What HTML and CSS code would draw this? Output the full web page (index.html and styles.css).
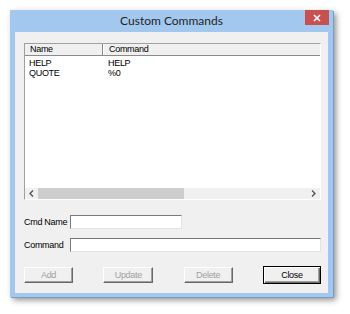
FILE: index.html
```html
<!DOCTYPE html>
<html lang="en">
<head>
    <meta charset="UTF-8">
    <title>Custom Commands</title>
    <link rel="stylesheet" href="styles.css">
</head>
<body>

<div class="window">
    <div class="titlebar">
        <span></span>
        <span class="title">Custom Commands</span>
        <span class="close-box">
            <svg width="8" height="8" viewBox="0 0 8 8"><path d="M1 1L7 7M7 1L1 7" stroke="#fff" stroke-width="1.6"/></svg>
        </span>
    </div>
    <div class="client">
        <div class="list">
            <div class="list-head">
                <div class="col-name">Name</div>
                <div class="col-cmd">Command</div>
            </div>
            <div class="list-body">
                <div class="row"><span class="col-name">HELP</span><span class="col-cmd">HELP</span></div>
                <div class="row"><span class="col-name">QUOTE</span><span class="col-cmd">%0</span></div>
            </div>
            <div class="hscroll">
                <span class="arrow">
                    <svg width="5" height="7" viewBox="0 0 5 7"><path d="M4 0.5L1 3.5L4 6.5" fill="none" stroke="#505050" stroke-width="1.3"/></svg>
                </span>
                <div class="track"><div class="thumb"></div></div>
                <span class="arrow">
                    <svg width="5" height="7" viewBox="0 0 5 7"><path d="M1 0.5L4 3.5L1 6.5" fill="none" stroke="#505050" stroke-width="1.3"/></svg>
                </span>
            </div>
        </div>
        <div class="fields">
            <label>Cmd Name</label>
            <input type="text" class="short">
            <label>Command</label>
            <input type="text">
        </div>
        <div class="buttons">
            <button disabled>Add</button>
            <button disabled class="wide">Update</button>
            <button disabled>Delete</button>
            <button class="default">Close</button>
        </div>
    </div>
</div>

</body>
</html>
```
FILE: styles.css
```css
body {
    margin: 0;
    padding: 10px;
    background-color: #fff;
    font-family: "Liberation Sans", Arial, sans-serif;
    font-size: 9px;
    letter-spacing: -0.3px;
    color: #000;
}
.window {
    width: 323px;
    height: 287px;
    box-sizing: border-box;
    background-color: #a3c8f0;
    padding: 0 5px 4px 5px;
    display: flex;
    flex-direction: column;
    box-shadow: 1px 1px 0 #7f9bbb, 3px 3px 6px rgba(0, 0, 0, 0.45);
}
.titlebar {
    height: 22px;
    display: grid;
    grid-template-columns: 1fr auto 1fr;
    align-items: start;
}
.title {
    font-family: Lato, "Open Sans", sans-serif;
    font-size: 12px;
    letter-spacing: 0;
    line-height: 22px;
    color: #1f1f1f;
}
.close-box {
    justify-self: end;
    margin-right: -1px;
    width: 24px;
    height: 15px;
    background-color: #c75050;
    display: flex;
    justify-content: center;
    align-items: center;
}
.client {
    flex: 1;
    background-color: #f0f0f0;
    padding: 11px 7px 0 9px;
}
.list {
    height: 157px;
    box-sizing: border-box;
    border: 1px solid;
    border-color: #a0a0a0 #fff #fff #a0a0a0;
    background-color: #fff;
    display: flex;
    flex-direction: column;
}
.list-head {
    display: flex;
    height: 11px;
    background-color: #f0f0f0;
    border-bottom: 1px solid #8a8a8a;
    line-height: 11px;
}
.list-head .col-name {
    border-right: 1px solid #8a8a8a;
    box-shadow: 1px 0 0 #fff;
}
.col-name {
    width: 72px;
    padding-left: 5px;
    flex: none;
}
.col-cmd {
    padding-left: 6px;
}
.list-body {
    flex: 1;
    padding-top: 2px;
}
.row {
    display: flex;
    height: 10px;
    line-height: 10px;
}
.row .col-name {
    width: 73px;
    padding-left: 4px;
}
.hscroll {
    height: 11px;
    display: flex;
    background-color: #f0f0f0;
}
.arrow {
    width: 13px;
    display: flex;
    justify-content: center;
    align-items: center;
}
.track {
    flex: 1;
    display: flex;
}
.thumb {
    width: 146px;
    background-color: #cdcdcd;
}
.fields {
    margin-top: 15px;
    display: grid;
    grid-template-columns: 46px 1fr;
    row-gap: 9px;
    align-items: center;
}
.fields label {
    line-height: 14px;
    white-space: nowrap;
}
.fields input {
    height: 14px;
    box-sizing: border-box;
    margin: 0;
    padding: 0;
    border: 1px solid;
    border-color: #7a7a7a #e3e3e3 #e3e3e3 #7a7a7a;
    background-color: #fff;
    width: 100%;
}
.fields input.short {
    width: 112px;
}
.buttons {
    margin-top: 14px;
    height: 18px;
    display: flex;
    justify-content: space-between;
    align-items: center;
}
button {
    font-family: inherit;
    font-size: 9px;
    letter-spacing: -0.3px;
    width: 49px;
    height: 16px;
    padding: 0;
    background-color: #f0f0f0;
    border: 1px solid;
    border-color: #fff #696969 #696969 #fff;
    box-shadow: inset -1px -1px 0 #a0a0a0;
    color: #000;
}
button.wide {
    width: 50px;
}
button:disabled {
    color: #a0a0a0;
}
button.default {
    width: 58px;
    height: 18px;
    outline: none;
    border: 1px solid #000;
    box-shadow: inset 1px 1px 0 #fff, inset -1px -1px 0 #696969, inset -2px -2px 0 #a0a0a0;
}
```
